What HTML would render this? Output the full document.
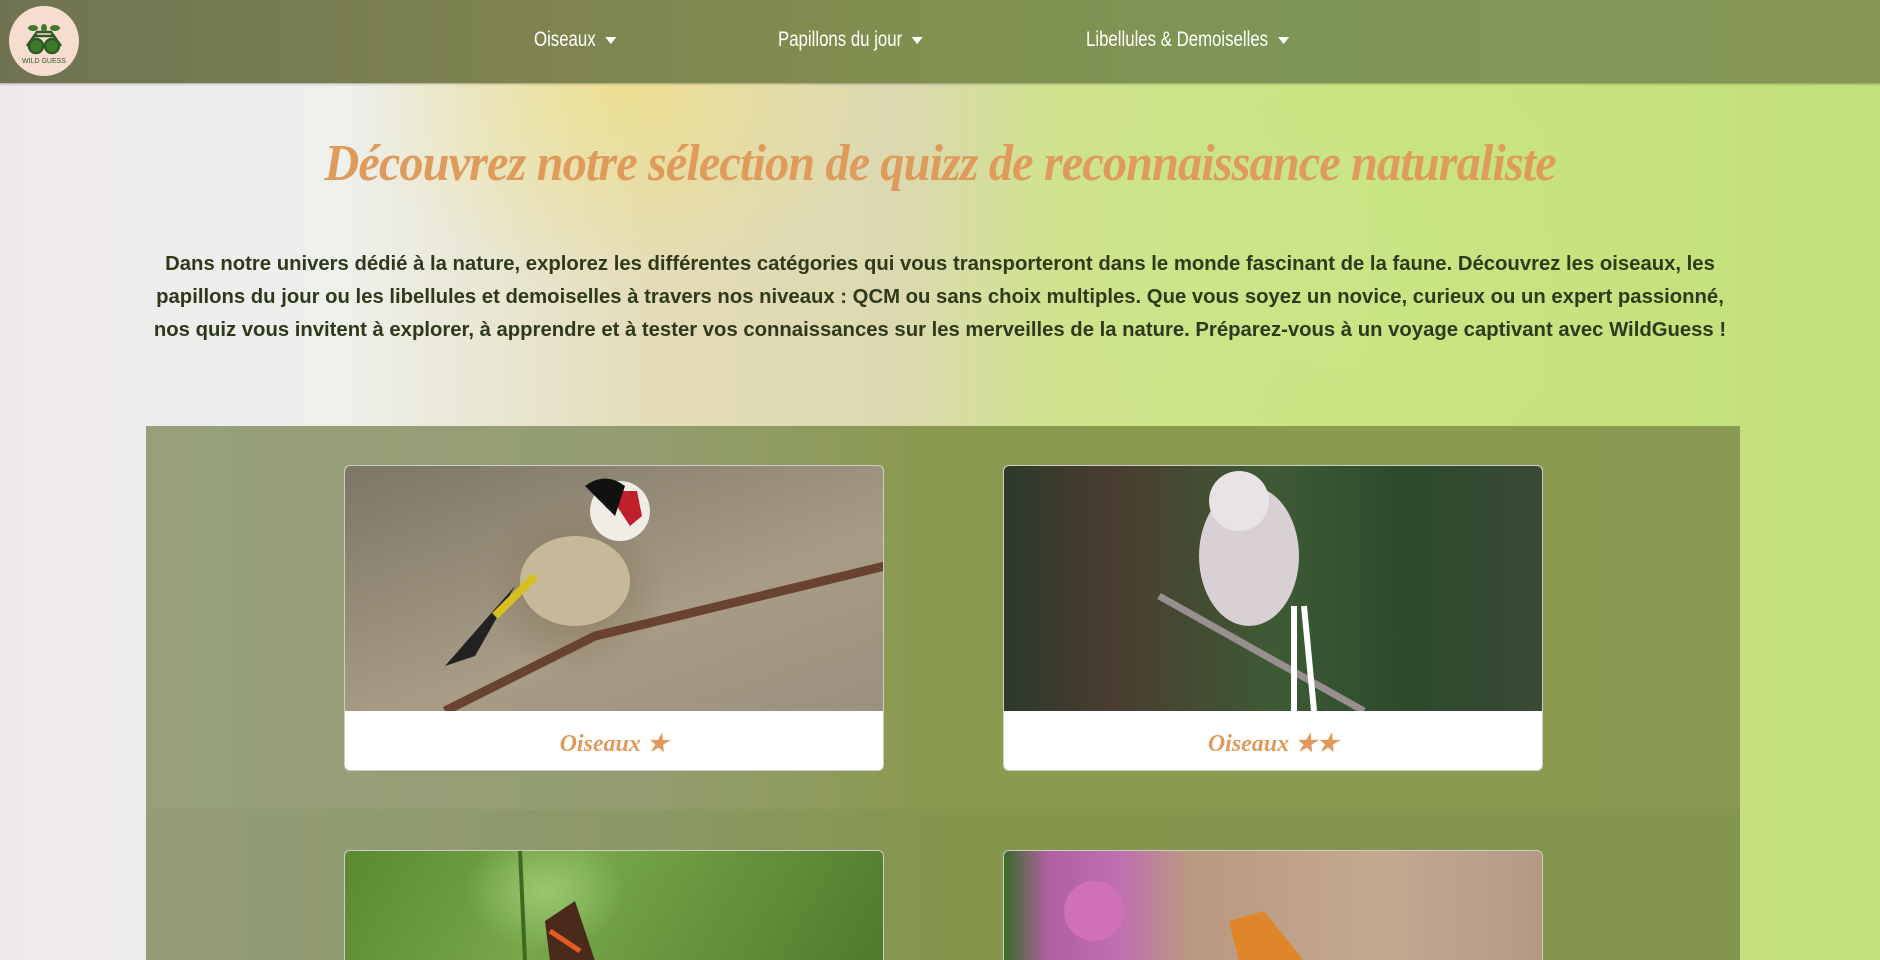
<!DOCTYPE html>
<html><head><meta charset="utf-8"><style>
*{margin:0;padding:0;box-sizing:border-box}
html{width:1880px;height:960px;overflow:hidden}
body{width:1880px;height:960px;overflow:hidden;position:relative;font-family:"Liberation Sans",sans-serif;
background:
radial-gradient(ellipse 260px 200px at 620px 90px,rgba(240,225,120,.6),transparent),
radial-gradient(ellipse 300px 260px at 1350px 260px,rgba(200,230,140,.6),transparent),
linear-gradient(90deg,#efe9ec 0%,#eef0ec 18%,#e4dcb8 35%,#dcd9b0 48%,#cfe38e 56%,#c9e47c 75%,#c2e07e 100%);}
header{position:absolute;left:0;top:0;width:1880px;height:83px;background:linear-gradient(90deg,#6f7352 0%,#7f8450 30%,#80904f 50%,#7e9658 70%,#879656 100%);box-shadow:0 1px 2px rgba(0,0,0,.3)}
.logo{position:absolute;left:9px;top:6px;width:70px;height:70px;border-radius:50%;background:#f7ddd0}
.nav{position:absolute;top:28px;color:#fff;font-size:21px;font-family:"Liberation Sans Narrow","Liberation Sans",sans-serif;display:inline-block;transform:scaleX(.8);transform-origin:left;white-space:nowrap}
.nav:after{content:"";display:inline-block;margin-left:12px;vertical-align:middle;border-left:7px solid transparent;border-right:7px solid transparent;border-top:7px solid #fff}
h1{position:absolute;left:0;width:1880px;top:134px;text-align:center;font-family:"Liberation Serif",serif;font-style:italic;font-weight:bold;font-size:52px;color:#df9b5c;letter-spacing:-1px}
h1 span{display:inline-block;transform:scaleX(.93)}
p.intro{position:absolute;left:150px;width:1580px;top:248px;text-align:center;font-weight:bold;font-size:20.3px;line-height:33px;color:#2f3a1c}
.sec{position:absolute;left:146px;width:1594px;background:linear-gradient(90deg,#97a07b 0%,#949d72 30%,#8a9a4e 50%,#8a9a52 100%)}
.card{position:absolute;width:540px;background:#fff;border:1px solid #ccc;border-radius:6px;overflow:hidden}
.img{height:245px}
.lab{height:60px;text-align:center;line-height:66px;font-family:"Liberation Serif",serif;font-style:italic;font-weight:bold;font-size:24px;color:#df9b5c}
</style></head><body>
<header>
<div class="logo"><svg width="70" height="70" viewBox="0 0 70 70">
<g fill="none" stroke="#2d5a24" stroke-width="2.5"><path d="M18 40 L28 26 L42 26 L52 40"/><path d="M24 30h22"/></g>
<circle cx="27" cy="40" r="7" fill="#3d7a2c" stroke="#2d5a24" stroke-width="2.5"/><circle cx="43" cy="40" r="7" fill="#3d7a2c" stroke="#2d5a24" stroke-width="2.5"/>
<g fill="#3d7a2c"><ellipse cx="24" cy="22" rx="5" ry="3"/><ellipse cx="35" cy="22" rx="3" ry="4"/><ellipse cx="46" cy="22" rx="5" ry="3"/></g>
<text x="35" y="57" font-size="7" text-anchor="middle" fill="#2d5a24" font-family="Liberation Sans">WILD GUESS</text></svg></div>
<span class="nav" style="left:534px">Oiseaux</span>
<span class="nav" style="left:778px">Papillons du jour</span>
<span class="nav" style="left:1086px">Libellules &amp; Demoiselles</span>
</header>
<h1><span>Découvrez notre sélection de quizz de reconnaissance naturaliste</span></h1>
<p class="intro">Dans notre univers dédié à la nature, explorez les différentes catégories qui vous transporteront dans le monde fascinant de la faune. Découvrez les oiseaux, les papillons du jour ou les libellules et demoiselles à travers nos niveaux : QCM ou sans choix multiples. Que vous soyez un novice, curieux ou un expert passionné, nos quiz vous invitent à explorer, à apprendre et à tester vos connaissances sur les merveilles de la nature. Préparez-vous à un voyage captivant avec WildGuess !</p>
<div class="sec" style="top:426px;height:383px"></div>
<div class="sec" style="top:809px;height:151px;background:linear-gradient(90deg,#949d78 0%,#8d9868 30%,#84964c 50%,#84954e 100%)"></div>
<div class="card" style="left:344px;top:465px;height:306px"><div class="img" style="background:radial-gradient(ellipse 90px 90px at 230px 120px,#8a7a60,transparent),linear-gradient(160deg,#7d7666,#a89c86 60%,#9c9080)">
<svg width="540" height="245"><path d="M100 245 L250 170 L540 100" stroke="#6a4230" stroke-width="9" fill="none"/><ellipse cx="230" cy="115" rx="55" ry="45" fill="#c7b89a"/><circle cx="275" cy="45" r="30" fill="#f0ece6"/><path d="M262 25 l30 0 l5 25 l-12 10 z" fill="#c0202a"/><path d="M240 20 q20 -15 40 0 l-10 30 z" fill="#111"/><path d="M170 120 l-70 80 l30 -10 z" fill="#222"/><path d="M190 110 l-40 40" stroke="#d6c020" stroke-width="8"/></svg></div>
<div class="lab">Oiseaux ★</div></div>
<div class="card" style="left:1003px;top:465px;height:306px"><div class="img" style="background:linear-gradient(90deg,#2c3a2a,#4a3c30 20%,#3e5a35 50%,#2c4a2c 75%,#3a4a36)">
<svg width="540" height="245"><path d="M155 130 L360 245" stroke="#9a8f90" stroke-width="7" fill="none"/><ellipse cx="245" cy="90" rx="50" ry="70" fill="#d8d0d4"/><circle cx="235" cy="35" r="30" fill="#e8e4e6"/><path d="M300 140 l10 105 M290 140 l0 105" stroke="#fff" stroke-width="6"/></svg></div>
<div class="lab">Oiseaux ★★</div></div>
<div class="card" style="left:344px;top:850px;height:110px;border-bottom:none;border-radius:6px 6px 0 0"><div class="img" style="height:110px;background:radial-gradient(ellipse 80px 60px at 200px 40px,#9ac870,transparent),linear-gradient(120deg,#5a8a30,#78a84a 40%,#4e7a2c)">
<svg width="540" height="110"><path d="M175 0 L180 110" stroke="#3e6a20" stroke-width="4"/><path d="M200 70 l30 -20 l20 60 l-45 0 z" fill="#4a2a1a"/><path d="M205 80 l30 20" stroke="#e85a20" stroke-width="5"/></svg></div></div>
<div class="card" style="left:1003px;top:850px;height:110px;border-bottom:none;border-radius:6px 6px 0 0"><div class="img" style="height:110px;background:linear-gradient(90deg,#3a6a2a 0%,#b060a0 8%,#c070b0 22%,#b89a80 35%,#c4a890 70%,#b49a86)">
<svg width="540" height="110"><circle cx="90" cy="60" r="30" fill="#d070b8"/><path d="M225 70 l35 -10 l40 50 l-65 0 z" fill="#e0862a"/></svg></div></div>
</body></html>
